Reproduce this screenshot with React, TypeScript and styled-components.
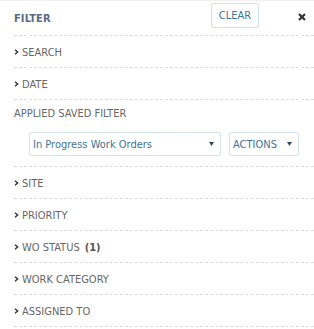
import React from "react";
import styled, { createGlobalStyle } from "styled-components";

const Global = createGlobalStyle`
  html, body { margin: 0; padding: 0; background: #fff; }
  body { font-family: "DejaVu Sans Condensed", "DejaVu Sans", sans-serif; }
`;

const Panel = styled.div`
  width: 314px;
  height: 329px;
  box-sizing: border-box;
  border-top: 1px solid #f0f0f0;
  padding-left: 14px;
  overflow: hidden;
`;

const Header = styled.div`
  display: flex;
  align-items: center;
  height: 34px;
  border-bottom: 1px dashed #dcdcdc;
  padding-right: 8px;
`;

const Title = styled.div`
  font-weight: bold;
  font-size: 11px;
  color: #5c6a88;
  flex: 1;
  letter-spacing: 0.1px;
`;

const ClearButton = styled.button`
  height: 25px;
  width: 48px;
  margin-top: -6px;
  padding: 0;
  background: #fff;
  border: 1px solid #cfe3ea;
  border-radius: 2px;
  font-family: inherit;
  font-size: 11px;
  color: #3f7393;
  margin-right: 39px;
`;

const Close = styled.svg`
  width: 8px;
  height: 8px;
  margin-top: -3px;
`;

const Row = styled.div`
  display: flex;
  align-items: center;
  box-sizing: border-box;
  height: 32px;
  padding-top: 2px;
  border-bottom: 1px dashed #dcdcdc;
  font-size: 11px;
  color: #666;
`;

const Chevron = styled.svg`
  width: 5px;
  height: 6px;
  margin-right: 3px;
  margin-top: -1px;
`;

const Count = styled.b`
  color: #555;
  margin-left: 5px;
`;

const Saved = styled.div`
  border-bottom: 1px dashed #dcdcdc;
  padding: 8px 0 10px;
`;

const SavedLabel = styled.div`
  font-size: 11px;
  color: #666;
  height: 12px;
  line-height: 12px;
  margin-bottom: 12px;
`;

const Controls = styled.div`
  display: flex;
  gap: 8px;
  padding-left: 15px;
`;

const Select = styled.div<{ $w: number }>`
  box-sizing: border-box;
  width: ${(p) => p.$w}px;
  height: 24px;
  border: 1px solid #d6e6ee;
  border-radius: 2px;
  display: flex;
  align-items: center;
  justify-content: space-between;
  padding: 0 6px 0 3px;
  font-size: 11px;
  color: #3f7393;
`;

const Arrow = styled.svg`
  width: 5px;
  height: 4px;
`;

const Chev = () => (
  <Chevron viewBox="0 0 5 6">
    <polyline points="1,0.8 3.6,3 1,5.2" fill="none" stroke="#333" strokeWidth="1.4" />
  </Chevron>
);

const Down = () => (
  <Arrow viewBox="0 0 5 4">
    <polygon points="0,0 5,0 2.5,4" fill="#2f4a60" />
  </Arrow>
);

const sections1 = ["SEARCH", "DATE"];
const sections2: { label: string; count?: number }[] = [
  { label: "SITE" },
  { label: "PRIORITY" },
  { label: "WO STATUS", count: 1 },
  { label: "WORK CATEGORY" },
  { label: "ASSIGNED TO" },
];

export default function App() {
  return (
    <>
      <Global />
      <Panel>
        <Header>
          <Title>FILTER</Title>
          <ClearButton>CLEAR</ClearButton>
          <Close viewBox="0 0 8 8">
            <path d="M1 1 L7 7 M7 1 L1 7" stroke="#333" strokeWidth="2.2" strokeLinecap="butt" />
          </Close>
        </Header>
        {sections1.map((s) => (
          <Row key={s}>
            <Chev />
            {s}
          </Row>
        ))}
        <Saved>
          <SavedLabel>APPLIED SAVED FILTER</SavedLabel>
          <Controls>
            <Select $w={192}>
              <span>In Progress Work Orders</span>
              <Down />
            </Select>
            <Select $w={70}>
              <span>ACTIONS</span>
              <Down />
            </Select>
          </Controls>
        </Saved>
        {sections2.map((s) => (
          <Row key={s.label}>
            <Chev />
            {s.label}
            {s.count !== undefined && <Count>({s.count})</Count>}
          </Row>
        ))}
      </Panel>
    </>
  );
}
